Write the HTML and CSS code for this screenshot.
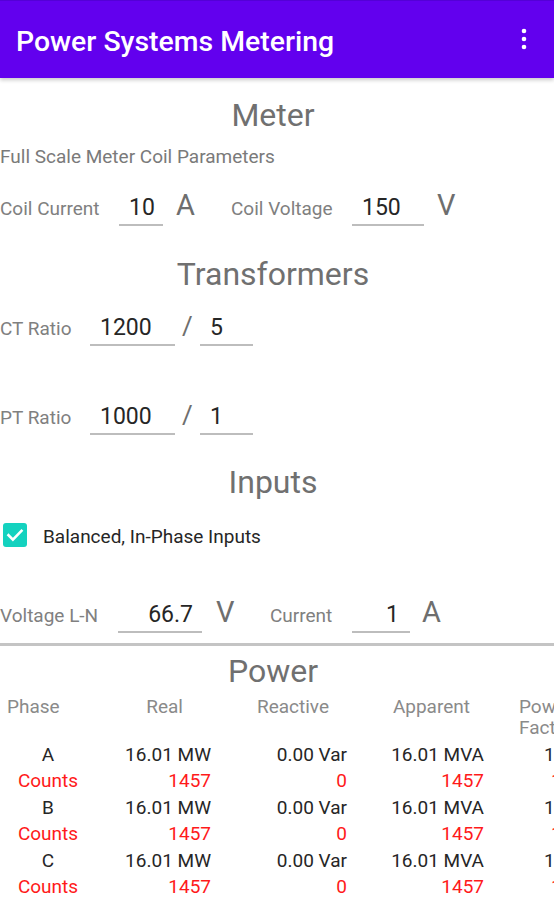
FILE: index.html
```html
<!DOCTYPE html>
<html lang="en">
<head>
<meta charset="utf-8">
<title>Power Systems Metering</title>
<link rel="stylesheet" href="styles.css">
</head>
<body>
<header class="appbar">
  <h1 class="appbar-title">Power Systems Metering</h1>
  <svg class="kebab" width="24" height="24" viewBox="0 0 24 24" aria-hidden="true">
    <circle cx="12" cy="4" r="2.3" fill="#fff"/>
    <circle cx="12" cy="12" r="2.3" fill="#fff"/>
    <circle cx="12" cy="20" r="2.3" fill="#fff"/>
  </svg>
</header>

<main class="content">
  <h2 class="section-title meter-title">Meter</h2>
  <p class="caption">Full Scale Meter Coil Parameters</p>
  <div class="field-row coil-row">
    <span class="label w-119">Coil Current</span>
    <span class="field w-44">10</span>
    <span class="unit w-55">A</span>
    <span class="label w-121">Coil Voltage</span>
    <span class="field w-72">150</span>
    <span class="unit">V</span>
  </div>

  <h2 class="section-title trans-title">Transformers</h2>
  <div class="field-row ct-row">
    <span class="label w-90">CT Ratio</span>
    <span class="field w-85">1200</span>
    <span class="slash">/</span>
    <span class="field w-53">5</span>
  </div>
  <div class="field-row pt-row">
    <span class="label w-90">PT Ratio</span>
    <span class="field w-85">1000</span>
    <span class="slash">/</span>
    <span class="field w-53">1</span>
  </div>

  <h2 class="section-title inputs-title">Inputs</h2>
  <label class="check-row">
    <span class="checkbox">
      <svg width="24" height="24" viewBox="0 0 24 24" aria-hidden="true">
        <path d="M5.5 12.2l4.4 4.4 8.6-8.8" fill="none" stroke="#fff" stroke-width="2.6" stroke-linecap="square"/>
      </svg>
    </span>
    <span class="check-label">Balanced, In-Phase Inputs</span>
  </label>
  <div class="field-row volt-row">
    <span class="label w-118">Voltage L-N</span>
    <span class="field field-right w-84">66.7</span>
    <span class="unit w-54 unit-v">V</span>
    <span class="label w-82">Current</span>
    <span class="field field-right field-pr11 w-58">1</span>
    <span class="unit unit-a">A</span>
  </div>

  <div class="divider"></div>

  <h2 class="section-title power-title">Power</h2>
  <div class="table-wrap">
    <div class="power-table">
      <div class="th th-phase">Phase</div>
      <div class="th th-real">Real</div>
      <div class="th th-reactive">Reactive</div>
      <div class="th th-apparent">Apparent</div>
      <div class="th th-pf">Power Factor</div>

      <div class="td td-phase">A</div>
      <div class="td">16.01 MW</div>
      <div class="td">0.00 Var</div>
      <div class="td">16.01 MVA</div>
      <div class="td td-pf">1.00</div>

      <div class="td td-phase count">Counts</div>
      <div class="td count">1457</div>
      <div class="td count">0</div>
      <div class="td count">1457</div>
      <div class="td td-pfc count">1000</div>

      <div class="td td-phase">B</div>
      <div class="td">16.01 MW</div>
      <div class="td">0.00 Var</div>
      <div class="td">16.01 MVA</div>
      <div class="td td-pf">1.00</div>

      <div class="td td-phase count">Counts</div>
      <div class="td count">1457</div>
      <div class="td count">0</div>
      <div class="td count">1457</div>
      <div class="td td-pfc count">1000</div>

      <div class="td td-phase">C</div>
      <div class="td">16.01 MW</div>
      <div class="td">0.00 Var</div>
      <div class="td">16.01 MVA</div>
      <div class="td td-pf">1.00</div>

      <div class="td td-phase count">Counts</div>
      <div class="td count">1457</div>
      <div class="td count">0</div>
      <div class="td count">1457</div>
      <div class="td td-pfc count">1000</div>
    </div>
  </div>
</main>
</body>
</html>
```

FILE: styles.css
```css
* { box-sizing: border-box; }

html, body {
  margin: 0;
  padding: 0;
}

body {
  width: 554px;
  height: 900px;
  overflow: hidden;
  background: #ffffff;
  font-family: Roboto, "Noto Sans", "Liberation Sans", sans-serif;
  color: #222222;
}

/* App bar */
.appbar {
  height: 78px;
  background: #6200ee;
  border-top: 1px solid #5400d6;
  display: flex;
  justify-content: space-between;
  align-items: flex-start;
  padding: 24px 18px 0 16px;
  box-shadow: 0 2px 4px rgba(0, 0, 0, 0.22);
  position: relative;
  z-index: 1;
}

.appbar-title {
  margin: 0;
  font-size: 28.4px;
  line-height: 34px;
  font-weight: 500;
  color: #ffffff;
}

.kebab {
  margin-top: 2px;
  display: block;
}

/* Sections */
.content {
  display: flex;
  flex-direction: column;
}

.section-title {
  margin: 0;
  padding-right: 8px;
  text-align: center;
  font-size: 32px;
  line-height: 40px;
  font-weight: 400;
  color: #707070;
}

.meter-title { margin-top: 17px; }
.trans-title { margin-top: 28px; }
.inputs-title { margin-top: 27px; }
.power-title { margin-top: 5px; }

.caption {
  margin: 10px 0 0;
  font-size: 19px;
  line-height: 24px;
  color: #7a7a7a;
}

/* Field rows */
.field-row {
  display: flex;
  align-items: baseline;
}

.coil-row { margin-top: 20px; }
.ct-row { margin-top: 16px; }
.pt-row { margin-top: 53px; }
.volt-row { margin-top: 49px; }

.label {
  font-size: 19px;
  line-height: 24px;
  color: #808080;
  flex: none;
}

.field {
  flex: none;
  font-size: 23px;
  line-height: 27px;
  padding: 0 10px 3px;
  border-bottom: 2px solid #bdbdbd;
  color: #262626;
}

.field-right {
  text-align: right;
  padding-right: 9px;
}

.field-pr11 { padding-right: 11px; }

.unit {
  flex: none;
  font-size: 29px;
  line-height: 32px;
  color: #6e6e6e;
  margin-left: 13px;
}

.unit-v { margin-left: 14px; }
.unit-a { margin-left: 12px; }

.slash {
  flex: none;
  font-size: 26px;
  line-height: 32px;
  color: #6e6e6e;
  width: 18px;
  margin-left: 7px;
}

.w-44 { width: 44px; }
.w-53 { width: 53px; }
.w-54 { width: 54px; }
.w-55 { width: 55px; }
.w-58 { width: 58px; }
.w-72 { width: 72px; }
.w-82 { width: 82px; }
.w-84 { width: 84px; }
.w-85 { width: 85px; }
.w-90 { width: 90px; }
.w-118 { width: 118px; }
.w-119 { width: 119px; }
.w-121 { width: 121px; }

/* Checkbox */
.check-row {
  display: flex;
  align-items: center;
  margin-top: 21px;
  height: 24px;
}

.checkbox {
  width: 24px;
  height: 24px;
  margin-left: 3px;
  border-radius: 3px;
  background: #14d2bf;
  display: block;
}

.checkbox svg { display: block; }

.check-label {
  margin-left: 16px;
  font-size: 19px;
  line-height: 24px;
  color: #262626;
  padding-top: 3px;
}

/* Divider */
.divider {
  margin-top: 10px;
  height: 3px;
  background: #c4c4c4;
}

/* Power table */
.table-wrap {
  margin-top: 5px;
  overflow: hidden;
  width: 554px;
}

.power-table {
  display: grid;
  grid-template-columns: 96px 115px 136px 137px 120px;
  width: 604px;
  font-size: 19px;
}

.th {
  color: #8a8a8a;
  line-height: 21px;
  text-align: right;
  padding-bottom: 4px;
}

.th-phase { text-align: left; padding-left: 7px; }
.th-real { padding-right: 28px; }
.th-reactive { padding-right: 18px; }
.th-apparent { padding-right: 14px; }
.th-pf { text-align: left; padding-left: 35px; padding-right: 20px; }

.td {
  line-height: 26.4px;
  text-align: right;
  color: #262626;
  white-space: nowrap;
}

.td-phase { text-align: center; }
.td-pf { text-align: left; padding-left: 60px; }
.td-pfc { text-align: left; padding-left: 67px; }

.count { color: #ff1a1a; }
```
